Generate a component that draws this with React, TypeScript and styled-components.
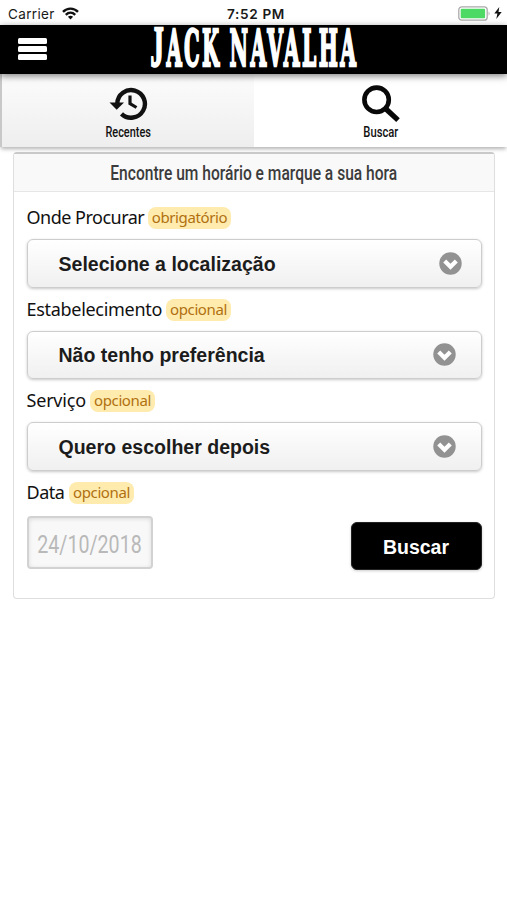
import React from "react";
import styled, { createGlobalStyle } from "styled-components";

const GlobalStyle = createGlobalStyle`
  * { box-sizing: border-box; }
  body { margin: 0; background: #fff; font-family: "Liberation Sans", Arial, sans-serif; }
`;

const Screen = styled.div`
  width: 507px;
  height: 900px;
  background: #fff;
  overflow: hidden;
`;

const StatusBar = styled.div`
  height: 25px;
  display: grid;
  grid-template-columns: 1fr auto 1fr;
  align-items: center;
  padding: 2px 5px 0 8px;
  font: 400 13.5px/16px Inter, sans-serif;
  letter-spacing: 0.35px;
  color: #1a1a1a;
`;

const Carrier = styled.div`
  display: flex;
  align-items: center;
  gap: 7px;
`;

const Clock = styled.div`
  font-weight: 600;
  font-size: 13.6px;
  letter-spacing: 0.65px;
  padding-left: 2px;
`;

const Power = styled.div`
  display: flex;
  justify-content: flex-end;
  align-items: center;
  gap: 3px;
  margin-top: -1px;
`;

const Header = styled.header`
  height: 49px;
  background: #000;
  display: flex;
  align-items: flex-start;
  position: relative;
  box-shadow: 0 2px 7px rgba(0, 0, 0, 0.5);
`;

const MenuButton = styled.button`
  display: flex;
  flex-direction: column;
  gap: 2px;
  width: 29px;
  margin: 13px 103px 0 17.5px;
  padding: 0;
  border: 0;
  background: none;
`;

const MenuLine = styled.span`
  height: 6px;
  border-radius: 1.5px;
  background: #fff;
`;

const Tabs = styled.nav`
  display: grid;
  grid-template-columns: 254px 253px;
  height: 73px;
  box-shadow: 0 3px 4px -1px rgba(0, 0, 0, 0.3);
`;

const Tab = styled.div<{ $muted?: boolean }>`
  display: flex;
  flex-direction: column;
  align-items: center;
  padding-top: 11px;
  background: ${(p) => (p.$muted ? "linear-gradient(#fcfcfc, #eeeeee)" : "#fff")};
  border-left: ${(p) => (p.$muted ? "2px solid #c8c8c8" : "0")};
`;

const Condensed = styled.span<{ $size: number; $scale: number; $weight?: number }>`
  display: inline-block;
  font-family: Roboto, sans-serif;
  font-size: ${(p) => p.$size}px;
  font-weight: ${(p) => p.$weight ?? 500};
  white-space: nowrap;
  transform: scaleX(${(p) => p.$scale});
`;

const TabLabel = styled.div`
  height: 18px;
  line-height: 18px;
  color: #111;
`;

const Panel = styled.main`
  width: 482px;
  height: 447px;
  margin: 5px 0 0 13px;
  border: 1px solid #dedede;
  border-top: 2px solid #c9c9c9;
  border-radius: 4px;
  background: #fff;
`;

const PanelTitle = styled.div`
  height: 38px;
  display: flex;
  justify-content: center;
  align-items: center;
  color: #3c3c3c;
  background: #f9f9f9;
  border-bottom: 1px solid #e6e6e6;
`;

const Form = styled.div`
  padding: 9px 12.5px 0 12.5px;
`;

const FieldLabel = styled.label`
  display: flex;
  align-items: center;
  gap: 4px;
  height: 32px;
  font: 400 18px/32px "Noto Sans", sans-serif;
  color: #111;
`;

const LabelText = styled.span<{ $width: number; $spacing: number }>`
  width: ${(p) => p.$width}px;
  white-space: nowrap;
  letter-spacing: ${(p) => p.$spacing}px;
`;

const Tag = styled.span<{ $width: number }>`
  width: ${(p) => p.$width}px;
  height: 22px;
  margin-top: 2px;
  border-radius: 8px;
  background: #ffebad;
  color: #b07010;
  font-size: 15px;
  line-height: 21px;
  letter-spacing: -0.38px;
  text-align: center;
`;

const Select = styled.div<{ $inset: number }>`
  display: flex;
  align-items: center;
  justify-content: space-between;
  height: 48.5px;
  margin: 6px 0 5px;
  padding: 2px ${(p) => p.$inset}px 0 31px;
  border: 1.5px solid #cdcdcd;
  border-radius: 6px;
  background: linear-gradient(#fff, #f0f0f0);
  box-shadow: 0 1px 3px rgba(0, 0, 0, 0.22);
  color: #1c1c1c;
  font-size: 19.55px;
  font-weight: 700;
  svg { margin-top: -2px; }
`;

const Bottom = styled.div`
  display: flex;
  justify-content: space-between;
  align-items: flex-end;
  margin-top: 8px;
`;

const DateInput = styled.div`
  width: 126px;
  height: 53px;
  margin-bottom: 1px;
  display: flex;
  align-items: center;
  justify-content: center;
  padding-top: 3px;
  border: 2px solid #d2d2d2;
  border-radius: 4px;
  background: #f8f8f8;
  box-shadow: inset 0 1px 4px rgba(0, 0, 0, 0.12);
  color: #b9b9b9;
`;

const Submit = styled.button`
  width: 131px;
  height: 48px;
  padding: 3px 0 0;
  border: 1px solid #222;
  border-radius: 6px;
  background: #000;
  color: #fff;
  font: 700 19.5px "Liberation Sans", Arial, sans-serif;
  box-shadow: 0 1px 3px rgba(0, 0, 0, 0.2);
`;

const LogoSvg = styled.svg`
  display: block;
  overflow: visible;
`;

const WifiIcon = () => (
  <svg width="17" height="13" viewBox="0 0 17 13" fill="none" stroke="#111" strokeWidth="2.4">
    <path d="M1 4.8C5.2 .6 11.8 .6 16 4.8" />
    <path d="M3.8 7.8C6.6 5.1 10.4 5.1 13.2 7.8" />
    <path d="M8.5 12.4 5.9 9.8Q8.5 7.8 11.1 9.8Z" fill="#111" stroke="none" />
  </svg>
);

const BatteryIcon = () => (
  <svg width="33" height="15" viewBox="0 0 33 15">
    <rect x=".8" y=".8" width="28.4" height="13.4" rx="3" fill="#fff" stroke="#aaa" strokeWidth="1.3" />
    <rect x="2.7" y="2.7" width="24.4" height="9.6" rx="1.2" fill="#4cd964" />
    <path d="M30.6 5.2Q32.5 7.5 30.6 9.8Z" fill="#aaa" />
  </svg>
);

const BoltIcon = () => (
  <svg width="8" height="12" viewBox="0 0 8 12">
    <path d="M5.3 0 .3 6.6H3.4L2.3 12 7.7 5H4.5Z" fill="#111" />
  </svg>
);

const Logo = () => (
  <LogoSvg width="212" height="46" viewBox="0 0 212 46" fill="#fff" stroke="#fff" strokeWidth="2.4">
    <text y="40.8" fontFamily="DejaVu Serif" fontWeight="700" fontSize="50.5" letterSpacing="6">
      <tspan x="0.5" y="40.8" textLength="16" lengthAdjust="spacingAndGlyphs" fontFamily="Liberation Serif" fontSize="56">J</tspan>
      <tspan x="16.5" y="40.8" textLength="55" lengthAdjust="spacingAndGlyphs">ACK</tspan>
      <tspan x="79.5" y="40.8" textLength="129" lengthAdjust="spacingAndGlyphs">NAVALHA</tspan>
    </text>
  </LogoSvg>
);

const HistoryIcon = () => (
  <svg width="39" height="38" viewBox="0 0 39 38" fill="none" stroke="#111">
    <path d="M8.3 18.5A13.8 13.8 0 1 1 12.5 28.8" strokeWidth="4.4" />
    <path d="M.5 17.5H15L7.7 24.8Z" fill="#111" stroke="none" />
    <path d="M21 10.5V18.5L27.5 22.5" strokeWidth="3.2" />
  </svg>
);

const SearchIcon = () => (
  <svg width="39" height="38" viewBox="0 0 39 38" fill="none" stroke="#080808">
    <circle cx="15.6" cy="14.8" r="12.2" strokeWidth="4.6" />
    <path d="M25 24 37 35.2" strokeWidth="5.2" />
  </svg>
);

const ChevronIcon = () => (
  <svg width="23" height="23" viewBox="0 0 23 23" fill="none">
    <circle cx="11.5" cy="11.5" r="11.2" fill="#929292" />
    <path d="M5.7 9 11.5 14.8 17.3 9" stroke="#fff" strokeWidth="4.2" />
  </svg>
);

type FieldProps = { label: string; width: number; spacing?: number; tag: string; tagWidth?: number };

const Caption = ({ label, width, spacing = -0.3, tag, tagWidth = 65 }: FieldProps) => (
  <FieldLabel>
    <LabelText $width={width} $spacing={spacing}>{label}</LabelText>
    <Tag $width={tagWidth}>{tag}</Tag>
  </FieldLabel>
);

export default function App() {
  return (
    <Screen>
      <GlobalStyle />
      <StatusBar>
        <Carrier>Carrier <WifiIcon /></Carrier>
        <Clock>7:52 PM</Clock>
        <Power><BatteryIcon /><BoltIcon /></Power>
      </StatusBar>
      <Header>
        <MenuButton aria-label="Menu"><MenuLine /><MenuLine /><MenuLine /></MenuButton>
        <Logo />
      </Header>
      <Tabs>
        <Tab $muted>
          <HistoryIcon />
          <TabLabel><Condensed $size={14} $scale={0.78}>Recentes</Condensed></TabLabel>
        </Tab>
        <Tab>
          <SearchIcon />
          <TabLabel><Condensed $size={14} $scale={0.8}>Buscar</Condensed></TabLabel>
        </Tab>
      </Tabs>
      <Panel>
        <PanelTitle>
          <Condensed $size={20.5} $scale={0.76}>Encontre um horário e marque a sua hora</Condensed>
        </PanelTitle>
        <Form>
          <Caption label="Onde Procurar" width={117.5} spacing={-0.5} tag="obrigatório" tagWidth={83} />
          <Select $inset={18.5}>Selecione a localização<ChevronIcon /></Select>
          <Caption label="Estabelecimento" width={135.5} tag="opcional" />
          <Select $inset={24.5}>Não tenho preferência<ChevronIcon /></Select>
          <Caption label="Serviço" width={59.5} spacing={-0.2} tag="opcional" />
          <Select $inset={24.5}>Quero escolher depois<ChevronIcon /></Select>
          <Caption label="Data" width={38.5} spacing={-0.5} tag="opcional" />
          <Bottom>
            <DateInput><Condensed $size={26.5} $scale={0.74} $weight={400}>24/10/2018</Condensed></DateInput>
            <Submit>Buscar</Submit>
          </Bottom>
        </Form>
      </Panel>
    </Screen>
  );
}
